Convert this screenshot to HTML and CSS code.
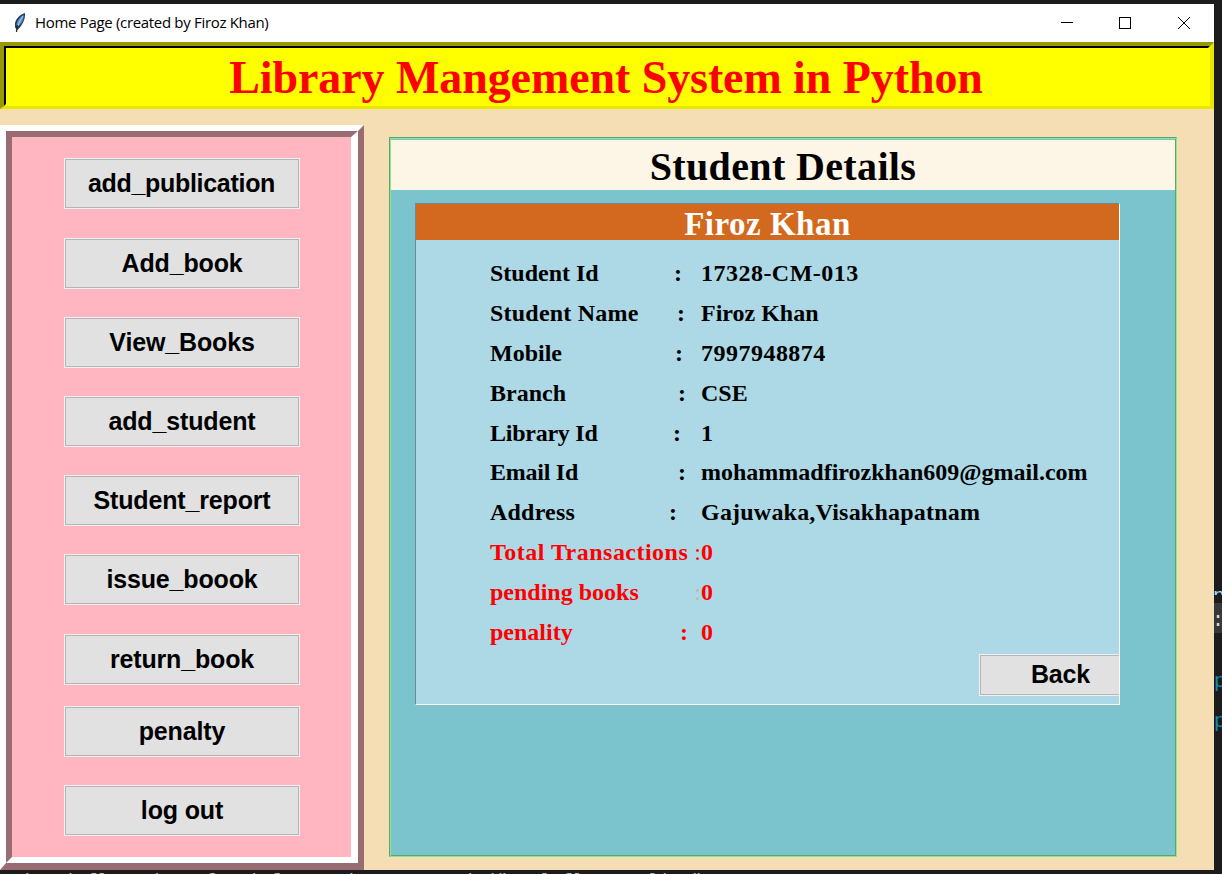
FILE: index.html
```html
<!DOCTYPE html>
<html lang="en">
<head>
<meta charset="utf-8">
<title>Home Page (created by Firoz Khan)</title>
<link rel="stylesheet" href="styles.css">
</head>
<body>
<div class="window">
  <header class="titlebar">
    <svg class="feather" width="14" height="22" viewBox="0 0 14 22">
      <path d="M12 1C8 2 3 6 2 11L2 15.500L4.500 18C8.500 14 12.500 8.500 12 1Z" fill="#26415f"/>
      <path d="M10.500 3C7 5 4 8.500 3.500 13.500L6.500 13C9.500 10 11 6.500 10.500 3Z" fill="#5b93d0"/>
      <path d="M10 4C8 7 6 10 5 14" fill="none" stroke="#a9cdf0" stroke-width="1"/>
      <path d="M4.200 13L3.500 20" fill="none" stroke="#2a2a2a" stroke-width="1.300"/>
    </svg>
    <span class="caption">Home Page (created by Firoz Khan)</span>
    <svg class="controls" width="132" height="14" viewBox="0 0 132 14" fill="none" stroke="#000" shape-rendering="crispEdges">
      <path d="M0 6.500h12"/>
      <rect x="58.500" y="1.500" width="11" height="11"/>
      <path d="M117 1l12 12M129 1l-12 12" shape-rendering="auto"/>
    </svg>
  </header>
  <div class="banner"><h1 class="banner-inner">Library Mangement System in Python</h1></div>
  <div class="workspace">
    <nav class="sidebar">
      <div class="sidebar-inner">
        <button>add_publication</button>
        <button>Add_book</button>
        <button>View_Books</button>
        <button>add_student</button>
        <button>Student_report</button>
        <button>issue_boook</button>
        <button>return_book</button>
        <button class="close">penalty</button>
        <button>log out</button>
      </div>
    </nav>
    <main class="panel">
      <h2>Student Details</h2>
      <section class="card">
        <h3>Firoz Khan</h3>
        <div class="rows">
          <div class="row"><div class="key k1"><span>Student Id</span><span>:</span></div><span class="loose">17328-CM-013</span></div>
          <div class="row"><div class="key k2"><span class="open">Student Name</span><span>:</span></div><span>Firoz Khan</span></div>
          <div class="row"><div class="key k3"><span>Mobile</span><span>:</span></div><span class="loose">7997948874</span></div>
          <div class="row"><div class="key k4"><span>Branch</span><span>:</span></div><span>CSE</span></div>
          <div class="row"><div class="key k5"><span class="tight">Library Id</span><span>:</span></div><span>1</span></div>
          <div class="row"><div class="key k4"><span class="tight">Email Id</span><span>:</span></div><span>mohammadfirozkhan609@gmail.com</span></div>
          <div class="row"><div class="key k6"><span class="open">Address</span><span>:</span></div><span class="open">Gajuwaka,Visakhapatnam</span></div>
          <div class="row red"><div class="key k7"><span class="loose">Total Transactions</span><span class="cut">:</span></div><span>0</span></div>
          <div class="row red"><div class="key k7"><span>pending books</span><span class="cut faint">:</span></div><span>0</span></div>
          <div class="row red"><div class="key k8"><span>penality</span><span>:</span></div><span>0</span></div>
        </div>
        <button class="back">Back</button>
      </section>
    </main>
  </div>
</div>
<aside class="behind"><span class="b1">n</span><span class="b2">:</span><span class="b3">p</span><span class="b4">p</span></aside>
<div class="console">  is si flanemis erformi frame size on rowsin("an lofla erasliv "</div>
</body>
</html>
```
FILE: styles.css
```css
* { box-sizing: border-box; }
body {
  margin: 0; width: 1222px; height: 874px; overflow: hidden;
  background: #1c1c1c; padding-top: 4px;
  display: grid; grid-template-columns: 1214px 8px; grid-template-rows: 866px 4px;
}
h1, h2, h3 { margin: 0; font-weight: bold; }
.window { background: #f5deb3; overflow: hidden; font-family: "Liberation Serif", serif; }
.titlebar { height: 38px; background: #fff; display: flex; align-items: center; padding-left: 13px; }
.caption { margin-left: 8px; width: 1026px; font: 15px/35px "Open Sans", sans-serif; height: 37px; color: #000; letter-spacing: -0.32px; white-space: nowrap; }
.banner { height: 67px; border: 4px solid; border-color: #999900 #e6e600 #e6e600 #999900; border-bottom-width: 3px; }
.banner-inner {
  height: 60px; border: 2px solid; border-color: #000 #ff0 #ff0 #000; background: #ff0;
  color: #f00; text-align: center; font-size: 46px; letter-spacing: -0.08px; line-height: 59px; white-space: nowrap; padding-right: 2px;
}
.workspace { display: flex; align-items: flex-start; padding-top: 16px; }
.sidebar { width: 364px; height: 745px; border: 6px solid; border-color: #fff #996c74 #996c74 #fff; border-bottom-width: 7px; }
.sidebar-inner {
  height: 732px; border: 6px solid; border-color: #996c74 #fff #fff #996c74; background: #ffb6c1;
  border-right-width: 7px; padding: 21px 0 0 52px;
}
button {
  display: block; padding: 0; border: 1px solid #f0f0f0; background: #e1e1e1; color: #000;
  box-shadow: inset 0 0 0 1px #b5b5b5; font: bold 25px "Liberation Sans", sans-serif; letter-spacing: -0.15px;
}
.sidebar button { width: 236px; height: 51px; margin-bottom: 28.2px; }
.sidebar button:first-child { margin-bottom: 28.6px; letter-spacing: -0.3px; padding-right: 1px; }
.sidebar .close { margin-top: -7px; }
.panel {
  margin: 12px 0 0 25px; width: 788px; height: 720px; background: #7bc4cd;
  border: 1px solid; border-color: #5fa568 #90e690 #90e690 #5fa568;
  box-shadow: inset 1px 1px 0 #90e690, inset -1px -1px 0 #5fa568; padding: 2px 1px 2px 1px;
}
h2 { height: 50px; background: #fdf5e6; text-align: center; font-size: 40px; letter-spacing: 0.36px; line-height: 53px; }
.card {
  margin: 13px 0 0 24px; width: 705px; height: 502px; background: #add8e6; overflow: hidden;
  border: 1px solid; border-color: #6e8b94 #fff #fff #6e8b94;
}
h3 { height: 36px; background: #d2691e; color: #fff; text-align: center; font-size: 33px; letter-spacing: 0.5px; line-height: 40px; }
.rows { padding: 13px 0 0 74px; }
.row { display: flex; height: 39.900px; line-height: 40px; font-size: 24px; font-weight: bold; white-space: nowrap; }
.key { width: 211px; flex: none; display: flex; justify-content: space-between; }
.k1 { padding-right: 19px; } .k2 { padding-right: 16px; } .k3 { padding-right: 18px; } .k4 { padding-right: 15px; }
.k5 { padding-right: 20px; } .k6 { padding-right: 24px; } .k7 { padding-right: 0; } .k8 { padding-right: 13px; }
.loose { letter-spacing: 0.48px; }
.open { letter-spacing: 0.21px; }
.tight { letter-spacing: -0.25px; }
.red { color: #f00; }
.cut { font-weight: normal; }
.faint { color: #b7bd9d; }
.back { width: 162px; height: 42px; margin: 2px 0 0 563px; padding-left: 1px; }
.behind { margin-top: 585px; height: 160px; overflow: hidden; font: 20px "Liberation Mono", monospace; color: #1689a5; display: flex; flex-direction: column; }
.behind span { height: 40px; line-height: 40px; flex: none; }
.behind .b1 { height: 6px; line-height: 15px; margin-left: -1px; overflow: hidden; color: #9cdcfe; }
.behind .b2 { height: 30px; line-height: 35px; margin-top: 8px; text-indent: -2px; color: #ddd; background: #383838; }
.behind .b3 { margin-top: 29px; }
.console { overflow: hidden; white-space: pre; font: 18px/19px "Liberation Mono", monospace; color: #bbb; grid-column: 1 / 3; margin-top: 2px; height: 2px; }
```
